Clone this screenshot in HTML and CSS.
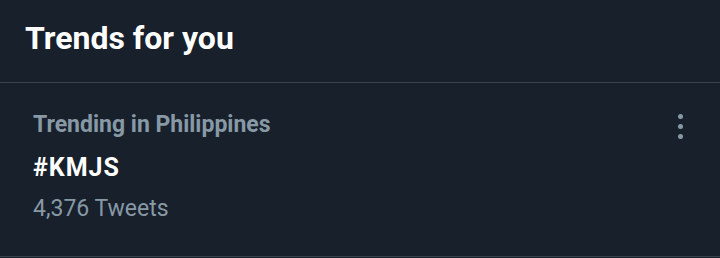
FILE: index.html
```html
<!DOCTYPE html>
<html>
<head>
<meta charset="utf-8">
<link rel="stylesheet" href="styles.css">
</head>
<body>
<div class="panel">
  <header class="head">
    <h1 class="title">Trends for you</h1>
  </header>
  <div class="trend">
    <div class="info">
      <div class="context">Trending in Philippines</div>
      <div class="tag">#KMJS</div>
      <div class="count">4,376 Tweets</div>
    </div>
    <div class="more" aria-label="More">
      <span class="dot"></span><span class="dot"></span><span class="dot"></span>
    </div>
  </div>
</div>
</body>
</html>
```
FILE: styles.css
```css
html, body {
  margin: 0;
  padding: 0;
  background: #17202b;
}
body {
  font-family: Roboto, "Noto Sans", sans-serif;
  width: 720px;
  height: 258px;
  overflow: hidden;
}
.panel {
  display: flex;
  flex-direction: column;
}
.head {
  height: 83px;
  box-sizing: border-box;
  border-bottom: 1px solid #38444d;
  padding: 18px 25px 0;
}
.title {
  margin: 0;
  font-size: 32px;
  font-weight: 700;
  line-height: 40px;
  color: #ffffff;
}
.trend {
  height: 173px;
  border-bottom: 1px solid #38444d;
  display: flex;
  justify-content: space-between;
  padding: 0 37px 0 33px;
}
.info {
  display: flex;
  flex-direction: column;
  padding-top: 26px;
}
.context {
  font-size: 23px;
  font-weight: 700;
  line-height: 32px;
  color: #8899a6;
}
.tag {
  font-size: 25px;
  font-weight: 700;
  line-height: 32px;
  letter-spacing: 1px;
  margin-top: 11px;
  color: #ffffff;
}
.count {
  font-size: 23px;
  line-height: 32px;
  margin-top: 9px;
  color: #8899a6;
}
.more {
  display: flex;
  flex-direction: column;
  gap: 5px;
  padding-top: 31px;
}
.dot {
  width: 5px;
  height: 5px;
  border-radius: 50%;
  background: #8899a6;
}
```
